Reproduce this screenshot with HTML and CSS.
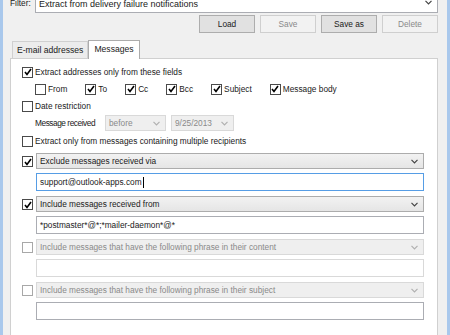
FILE: index.html
```html
<!DOCTYPE html>
<html lang="en">

<head>
    <meta charset="UTF-8">
    <title>Filter</title>
    <link rel="stylesheet" href="styles.css">
</head>

<body>
    <div class="window">

        <div class="filter-row">
            <span class="filter-label">Filter:</span>
            <div class="combo edit">
                <span class="combo-text">Extract from delivery failure notifications</span>
                <svg class="chev" width="7" height="5" viewBox="0 0 7 5"><path d="M0.5 0.8 L3.5 3.8 L6.5 0.8" /></svg>
            </div>
        </div>

        <div class="buttons">
            <button class="btn">Load</button>
            <button class="btn" disabled>Save</button>
            <button class="btn">Save as</button>
            <button class="btn" disabled>Delete</button>
        </div>

        <div class="tabs">
            <div class="tab">E-mail addresses</div>
            <div class="tab active">Messages</div>
        </div>

        <div class="panel">

            <label class="check first">
                <span class="box checked"><svg width="8" height="8" viewBox="0 0 8 8"><path d="M1 4 L3 6.5 L7 1" /></svg></span>
                Extract addresses only from these fields
            </label>

            <div class="fields">
                <label class="check"><span class="box"></span>From</label>
                <label class="check"><span class="box checked"><svg width="8" height="8" viewBox="0 0 8 8"><path d="M1 4 L3 6.5 L7 1" /></svg></span>To</label>
                <label class="check"><span class="box checked"><svg width="8" height="8" viewBox="0 0 8 8"><path d="M1 4 L3 6.5 L7 1" /></svg></span>Cc</label>
                <label class="check"><span class="box checked"><svg width="8" height="8" viewBox="0 0 8 8"><path d="M1 4 L3 6.5 L7 1" /></svg></span>Bcc</label>
                <label class="check"><span class="box checked"><svg width="8" height="8" viewBox="0 0 8 8"><path d="M1 4 L3 6.5 L7 1" /></svg></span>Subject</label>
                <label class="check"><span class="box checked"><svg width="8" height="8" viewBox="0 0 8 8"><path d="M1 4 L3 6.5 L7 1" /></svg></span>Message body</label>
            </div>

            <label class="check date">
                <span class="box"></span>
                Date restriction
            </label>

            <div class="received">
                <span class="received-label">Message received</span>
                <div class="combo off small">
                    <span class="combo-text">before</span>
                    <svg class="chev" width="7" height="5" viewBox="0 0 7 5"><path d="M0.5 0.8 L3.5 3.8 L6.5 0.8" /></svg>
                </div>
                <div class="combo off date-field">
                    <span class="combo-text">9/25/2013</span>
                    <svg class="chev" width="7" height="5" viewBox="0 0 7 5"><path d="M0.5 0.8 L3.5 3.8 L6.5 0.8" /></svg>
                </div>
            </div>

            <label class="check multi">
                <span class="box"></span>
                Extract only from messages containing multiple recipients
            </label>

            <div class="rule">
                <span class="box checked"><svg width="8" height="8" viewBox="0 0 8 8"><path d="M1 4 L3 6.5 L7 1" /></svg></span>
                <div class="rule-body">
                    <div class="combo">
                        <span class="combo-text">Exclude messages received via</span>
                        <svg class="chev" width="7" height="5" viewBox="0 0 7 5"><path d="M0.5 0.8 L3.5 3.8 L6.5 0.8" /></svg>
                    </div>
                    <div class="input focus">support@outlook-apps.com<span class="caret"></span></div>
                </div>
            </div>

            <div class="rule">
                <span class="box checked"><svg width="8" height="8" viewBox="0 0 8 8"><path d="M1 4 L3 6.5 L7 1" /></svg></span>
                <div class="rule-body">
                    <div class="combo">
                        <span class="combo-text">Include messages received from</span>
                        <svg class="chev" width="7" height="5" viewBox="0 0 7 5"><path d="M0.5 0.8 L3.5 3.8 L6.5 0.8" /></svg>
                    </div>
                    <div class="input">*postmaster*@*;*mailer-daemon*@*</div>
                </div>
            </div>

            <div class="rule">
                <span class="box off"></span>
                <div class="rule-body">
                    <div class="combo off">
                        <span class="combo-text">Include messages that have the following phrase in their content</span>
                        <svg class="chev" width="7" height="5" viewBox="0 0 7 5"><path d="M0.5 0.8 L3.5 3.8 L6.5 0.8" /></svg>
                    </div>
                    <div class="input off"></div>
                </div>
            </div>

            <div class="rule">
                <span class="box off"></span>
                <div class="rule-body">
                    <div class="combo off">
                        <span class="combo-text">Include messages that have the following phrase in their subject</span>
                        <svg class="chev" width="7" height="5" viewBox="0 0 7 5"><path d="M0.5 0.8 L3.5 3.8 L6.5 0.8" /></svg>
                    </div>
                    <div class="input"></div>
                </div>
            </div>

        </div>
    </div>
</body>

</html>
```

FILE: styles.css
```css
* {
    padding: 0;
    margin: 0;
    box-sizing: border-box;
    font-family: 'Liberation Sans', Arial, sans-serif;
}

:root {
    --bg-window: #f0f0f0;
    --frame: #a9c8ec;
    --text: #1a1a1a;
    --text-off: #8a8a8a;
    --border: #acacac;
    --border-off: #d9d9d9;
    --focus: #569de5;
}

body {
    width: 450px;
    height: 335px;
    overflow: hidden;
    background: var(--bg-window);
    color: var(--text);
    font-size: 8.3px;
}

.window {
    height: 335px;
    border-left: 3px solid var(--frame);
    border-right: 3px solid var(--frame);
    padding: 0 9px 0 7px;
    overflow: hidden;
}

/* filter line, cut at the top */
.filter-row {
    display: flex;
    align-items: center;
    height: 22px;
    margin-top: -9px;
}

.filter-label {
    width: 25px;
    padding-top: 2px;
}

.filter-row .combo {
    flex: 1;
    height: 22px;
    background: #fff;
    border-color: #abadb3;
}

.filter-row .combo-text {
    font-size: 9px;
    padding-top: 3px;
}

/* buttons */
.buttons {
    display: flex;
    justify-content: flex-end;
    gap: 5px;
    margin-top: 2px;
}

.btn {
    width: 56px;
    height: 18px;
    border: 1px solid #adadad;
    background: #e1e1e1;
    color: var(--text);
    font-size: 8.3px;
}

.btn:disabled {
    border-color: #cfcfcf;
    background: #f2f2f2;
    color: var(--text-off);
}

/* tabs */
.tabs {
    display: flex;
    align-items: flex-end;
    height: 18px;
    margin-top: 7px;
    padding-left: 2px;
    position: relative;
    z-index: 1;
}

.tab {
    height: 17px;
    padding: 3px 4px 0 4px;
    border: 1px solid #d0d0d0;
    border-bottom: none;
    background: #ececec;
    font-size: 8.6px;
}

.tab.active {
    height: 19px;
    margin-bottom: -1px;
    padding: 3px 5px 0 5px;
    background: #fff;
    border-color: var(--border);
}

/* panel */
.panel {
    height: 290px;
    background: #fff;
    border: 1px solid #d0d0d0;
    padding: 6px 13px 0 11px;
    display: flex;
    flex-direction: column;
}

.check {
    display: flex;
    align-items: center;
    height: 14px;
    gap: 2px;
    white-space: nowrap;
}

.box {
    width: 11px;
    height: 11px;
    flex: none;
    border: 1px solid #4a4a4a;
    background: #fff;
    display: flex;
    align-items: center;
    justify-content: center;
}

.box svg path {
    fill: none;
    stroke: #000;
    stroke-width: 1.6;
}

.box.off {
    border-color: #a8a8a8;
}

.fields {
    display: flex;
    margin-top: 3px;
    padding-left: 13px;
}

.fields .check {
    margin-right: 18px;
}

.date {
    margin-top: 3px;
}

.received {
    display: flex;
    align-items: center;
    gap: 5px;
    height: 16px;
    margin-top: 2px;
    padding-left: 13px;
}

.received-label {
    flex: none;
    width: 65px;
    white-space: nowrap;
    letter-spacing: -0.45px;
}

.small {
    flex: none;
    width: 61px;
}

.date-field {
    flex: none;
    width: 63px;
    background: #fff;
}

.multi {
    margin-top: 3px;
}

/* combos and inputs */
.combo {
    display: flex;
    align-items: center;
    justify-content: space-between;
    height: 16px;
    border: 1px solid var(--border);
    background: linear-gradient(#f2f2f2, #e5e5e5);
    padding: 0 5px 0 3px;
}

.combo-text {
    white-space: nowrap;
}

.chev path {
    fill: none;
    stroke: #444;
    stroke-width: 1.2;
}

.combo.off {
    border-color: var(--border-off);
    background: #efefef;
    color: var(--text-off);
}

.combo.off .chev path {
    stroke: #b0b0b0;
}

.input {
    height: 18px;
    border: 1px solid #abadb3;
    background: #fff;
    padding: 3px 3px 0 3px;
    display: flex;
    align-items: flex-start;
}

.input.focus {
    border-color: var(--focus);
}

.input.off {
    border-color: var(--border-off);
}

.caret {
    width: 1px;
    height: 11px;
    background: #000;
    margin-left: 1px;
}

.rule {
    display: flex;
    gap: 3px;
    margin-top: 5px;
}

.rule > .box {
    margin-top: 3px;
}

.rule-body {
    flex: 1;
    display: flex;
    flex-direction: column;
    gap: 4px;
}
```
